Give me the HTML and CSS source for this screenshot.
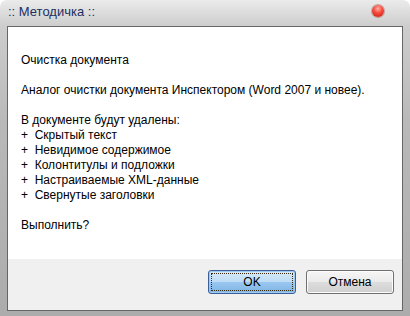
FILE: index.html
```html
<!DOCTYPE html>
<html lang="ru">
    <head>
        <meta charset="UTF-8" />
        <title>Методичка</title>
        <link rel="stylesheet" href="styles.css">
    </head>
    <body>
        <div class="window">
            <div class="titlebar">
                <span class="title">:: Методичка ::</span>
                <span class="close"></span>
            </div>
            <div class="client">
                <div class="message">
                    <p>Очистка документа</p>
                    <p>Аналог очистки документа Инспектором (Word 2007 и новее).</p>
                    <p>
                        В документе будут удалены:<br>
                        +&nbsp; Скрытый текст<br>
                        +&nbsp; Невидимое содержимое<br>
                        +&nbsp; Колонтитулы и подложки<br>
                        +&nbsp; Настраиваемые XML-данные<br>
                        +&nbsp; Свернутые заголовки
                    </p>
                    <p>Выполнить?</p>
                </div>
                <div class="buttons">
                    <button class="btn btn-ok"><span class="focus">OK</span></button>
                    <button class="btn">Отмена</button>
                </div>
            </div>
        </div>
    </body>
</html>
```

FILE: styles.css
```css
* {
    margin: 0;
    padding: 0;
    box-sizing: border-box;
}
body {
    font-family: "Liberation Sans", "Noto Sans", sans-serif;
    font-size: 12px;
    color: #000;
    background: #fff;
}
.window {
    width: 410px;
    height: 316px;
    display: flex;
    flex-direction: column;
    border-radius: 7px 7px 0 0;
    background: linear-gradient(#ebebeb, #cdcdcd 26px, #b9b9b9 120px, #acacac);
    padding: 0 7px 5px 7px;
}
.titlebar {
    height: 26px;
    display: flex;
    align-items: center;
    justify-content: space-between;
    padding: 0 19px 4px 1px;
}
.title {
    color: #1c2f63;
    font-size: 13px;
}
.close {
    width: 12px;
    height: 12px;
    border-radius: 50%;
    background: radial-gradient(circle at 50% 30%, #ffb0a6 0, #f4473a 45%, #c81a10 100%);
    box-shadow: 0 0 0 1px rgba(150, 40, 30, 0.35);
}
.client {
    flex: 1;
    display: flex;
    flex-direction: column;
    border: 1px solid #666;
    background: #f0f0f0;
}
.message {
    height: 232px;
    background: #fff;
    padding: 26px 13px 0 13px;
    line-height: 15px;
}
.message p {
    margin-bottom: 15px;
}
.buttons {
    display: flex;
    justify-content: flex-end;
    gap: 10px;
    padding: 11px 8px 0 0;
}
.btn {
    width: 88px;
    height: 24px;
    font-family: inherit;
    font-size: 12px;
    color: #000;
    border: 1px solid #707070;
    border-radius: 3px;
    background: linear-gradient(#f6f6f6, #eaeaea 50%, #dddddd 51%, #cfcfcf);
    box-shadow: inset 0 0 0 1px #fcfcfc;
}
.btn-ok {
    border-color: #3d5d96;
    background: linear-gradient(#d9ebfa, #bddbf5 50%, #99c7ef 51%, #7fb4e4);
    box-shadow: inset 0 0 0 1px #9ec9f0;
    padding: 2px;
}
.focus {
    display: flex;
    align-items: center;
    justify-content: center;
    height: 100%;
    border: 1px dotted #3a2a10;
}
```
